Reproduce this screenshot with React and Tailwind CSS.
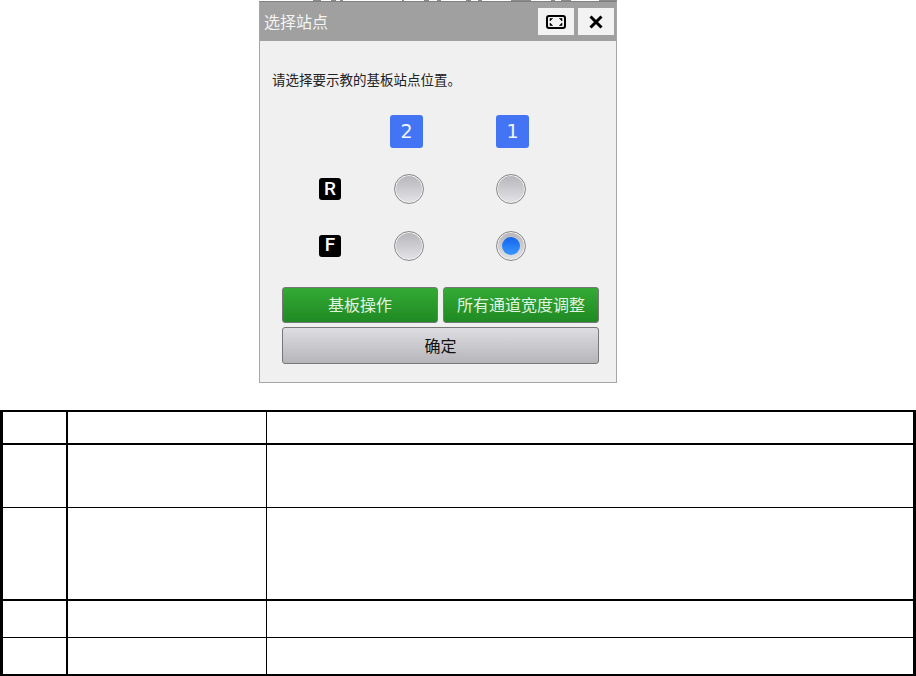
const cjk = { fontFamily: '"Noto Sans CJK SC", "Liberation Sans", sans-serif' };

function Radio({ on }) {
  return (
    <div className="w-[30px] h-[30px] rounded-full border border-[#8a8a8a] shadow-[inset_0_0_0_1px_#f2f2f2] bg-gradient-to-b from-[#b6b6ba] to-[#e4e4e8] flex items-center justify-center">
      {on && <div className="w-[18px] h-[18px] rounded-full bg-gradient-to-b from-[#1464ec] to-[#3a96ff]" />}
    </div>
  );
}

function Badge({ children }) {
  return (
    <div className="w-[33px] h-[33px] rounded-[3px] bg-[#4274f4] text-[#f0f4ff] text-[19px] flex items-center justify-center" style={{ fontFamily: '"DejaVu Sans", sans-serif' }}>
      {children}
    </div>
  );
}

function Side({ children }) {
  return (
    <div className="w-[22px] h-[22px] rounded-[3px] bg-black text-white text-[19px] font-medium flex items-center justify-center" style={{ fontFamily: 'Roboto, sans-serif' }}>
      {children}
    </div>
  );
}

function Row({ h, thick, last }) {
  return (
    <div className={`flex ${h} ${last ? '' : thick ? 'border-b-2 border-black' : 'border-b border-black'}`}>
      <div className="w-[65px] shrink-0 border-r-2 border-black" />
      <div className="w-[199px] shrink-0 border-r border-black" />
      <div className="flex-1" />
    </div>
  );
}

const marks = [
  [54, 8], [10, 5], [4, 3], [59, 2], [20, 5], [8, 4], [25, 5], [7, 4], [29, 20], [20, 4], [6, 10], [28, 18],
];

export default function App() {
  return (
    <div className="w-[916px] h-[676px] bg-white overflow-hidden flex flex-col" style={cjk}>
      <div className="h-[1px] flex pl-[259px]">
        {marks.map(([gap, w], i) => (
          <div key={i} className="h-[1px] bg-[#8a8a8a]" style={{ marginLeft: gap, width: w }} />
        ))}
      </div>
      <div className="ml-[259px] w-[358px] h-[382px] border border-[#a6a6a6] border-t-[#808080] bg-[#f0f0f0] flex flex-col">
        <div className="h-[39px] bg-[#a0a0a0] flex items-center pl-[4px] pr-[2px] shrink-0">
          <span className="text-[16px] text-[#f4f4f4] flex-1 pb-[1px]">选择站点</span>
          <div className="flex gap-[4px]">
            <div className="w-[36px] h-[27px] bg-[#f2f2f2] flex items-center justify-center">
              <svg width="20" height="14" viewBox="0 0 20 14" fill="none">
                <rect x="1" y="1" width="18" height="12" rx="2" stroke="#000" strokeWidth="2" />
                <path d="M4 3.5h2.6L4 6zM16 3.5h-2.6L16 6zM4 10.5h2.6L4 8zM16 10.5h-2.6L16 8z" fill="#000" stroke="#000" strokeWidth="0.6" />
              </svg>
            </div>
            <div className="w-[36px] h-[27px] bg-[#f2f2f2] flex items-center justify-center">
              <svg width="14" height="14" viewBox="0 0 14 14" fill="none">
                <path d="M1.5 1.5l11 11M12.5 1.5l-11 11" stroke="#000" strokeWidth="3" />
              </svg>
            </div>
          </div>
        </div>
        <p className="text-[13.5px] leading-[18px] text-[#222] ml-[12px] mt-[29px]">请选择要示教的基板站点位置。</p>
        <div className="ml-[59px] mt-[27px] grid grid-cols-[71px_106px_33px] grid-rows-[33px_30px_31px] gap-y-[26px]">
          <div />
          <Badge>2</Badge>
          <Badge>1</Badge>
          <div className="flex items-center"><Side>R</Side></div>
          <div className="pl-[4px]"><Radio /></div>
          <div><Radio /></div>
          <div className="flex items-center"><Side>F</Side></div>
          <div className="pl-[4px] pt-[1px]"><Radio /></div>
          <div className="pt-[1px]"><Radio on /></div>
        </div>
        <div className="ml-[22px] mt-[26px] w-[317px] flex flex-col gap-[4px]">
          <div className="flex gap-[5px]">
            {['基板操作', '所有通道宽度调整'].map((t) => (
              <div key={t} className="flex-1 h-[36px] pb-[2px] rounded-[3px] border border-[#777] bg-gradient-to-b from-[#34aa34] to-[#1f8a24] text-[#e0f2e0] text-[16px] flex items-center justify-center">{t}</div>
            ))}
          </div>
          <div className="h-[37px] pb-[2px] rounded-[3px] border border-[#777] bg-gradient-to-b from-[#dedee2] to-[#b6b6ba] text-[16px] text-[#111] flex items-center justify-center">确定</div>
        </div>
      </div>
      <div className="mt-[27px] h-[266px] border-l-[3px] border-r-[3px] border-t-2 border-b-2 border-black flex flex-col">
        <Row h="h-[33px]" thick />
        <Row h="h-[63px]" />
        <Row h="h-[93px]" thick />
        <Row h="h-[37px]" />
        <Row h="flex-1" last />
      </div>
    </div>
  );
}
